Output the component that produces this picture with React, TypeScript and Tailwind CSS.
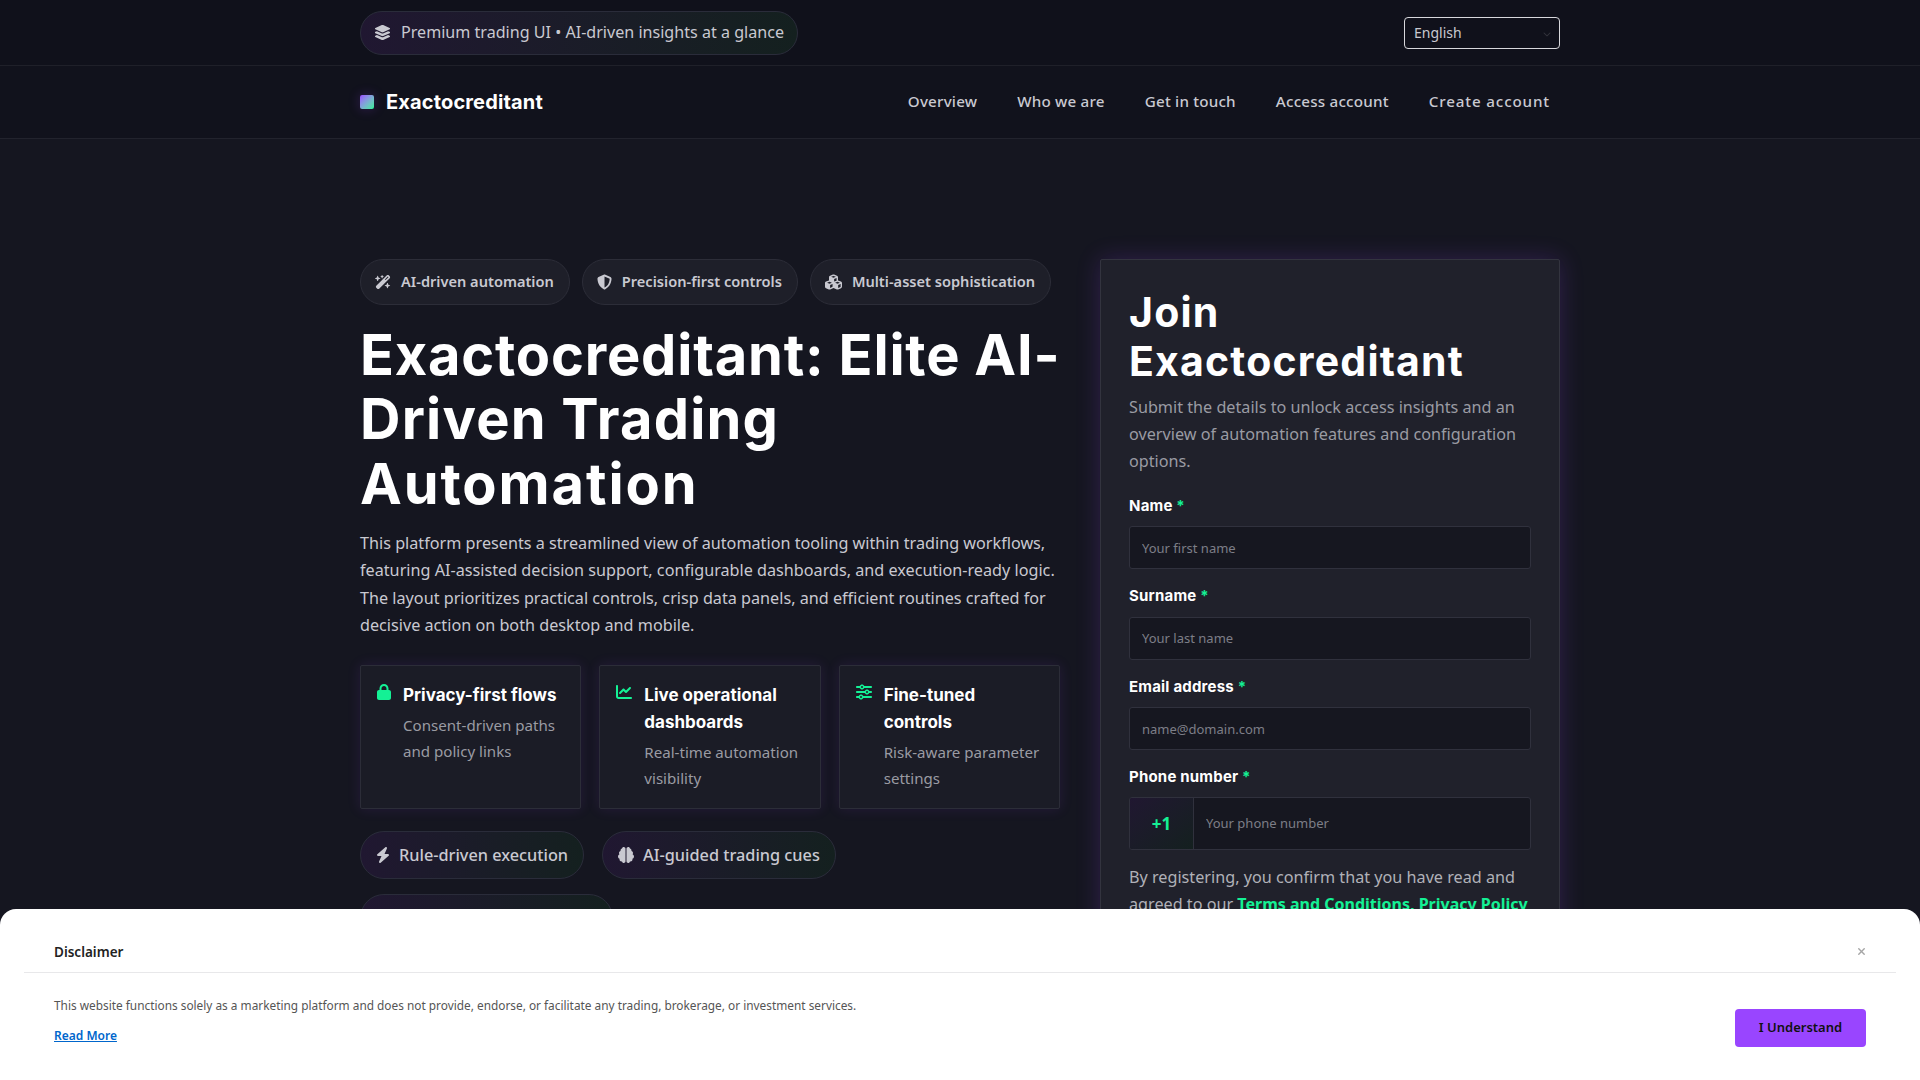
import React from "react";
import {
  FaLayerGroup,
  FaWandMagicSparkles,
  FaShieldHalved,
  FaCubes,
  FaLock,
  FaChartLine,
  FaSliders,
  FaBolt,
  FaBrain,
  FaChevronDown,
  FaXmark,
} from "react-icons/fa6";

const heroPills = [
  { icon: <FaWandMagicSparkles className="w-[16px] h-4" />, label: "AI-driven automation" },
  { icon: <FaShieldHalved className="w-[15px] h-4" />, label: "Precision-first controls" },
  { icon: <FaCubes className="w-[17px] h-[16px]" />, label: "Multi-asset sophistication" },
];

const features = [
  { icon: <FaLock className="w-[14px] h-4" />, title: "Privacy-first flows", desc: "Consent-driven paths and policy links" },
  { icon: <FaChartLine className="w-4 h-4" />, title: "Live operational dashboards", desc: "Real-time automation visibility" },
  { icon: <FaSliders className="w-4 h-4" />, title: "Fine-tuned controls", desc: "Risk-aware parameter settings" },
];

const tags = [
  { icon: <FaBolt className="w-[14px] h-4" />, label: "Rule-driven execution" },
  { icon: <FaBrain className="w-[16px] h-[16px]" />, label: "AI-guided trading cues" },
  { icon: <FaLayerGroup className="w-4 h-4" />, label: "Configurable dashboards" },
];

function Field({ label, placeholder }: { label: string; placeholder: string }) {
  return (
    <div className="mb-[17px]">
      <label className="block mb-[10.5px] font-['Inter'] font-bold text-[15px] leading-[20px] tracking-[0.2px] text-white">
        {label} <span className="text-[#14f195]">*</span>
      </label>
      <input
        placeholder={placeholder}
        className="block w-full h-[43px] px-[12px] rounded-[3px] border border-[#30313d] bg-[#161720] text-[13px] text-white outline-none placeholder:text-[#7d7e87]"
      />
    </div>
  );
}

export default function App() {
  return (
    <div className="relative h-screen overflow-hidden bg-[#151620] font-['Noto_Sans',sans-serif]">
      <div className="h-[66px] bg-[#10111b] border-b border-[#1f2029]">
        <div className="w-[1200px] mx-auto h-full flex items-center justify-between">
          <div className="flex items-center gap-[10px] h-[44px] pl-[13px] pr-[13px] rounded-full border border-[#2a2c3a] bg-linear-to-r from-[#201731] to-[#14201f] text-[#c9c9d1]">
            <FaLayerGroup className="w-[17px] h-[17px]" />
            <span className="pb-[1px] text-[16.1px] leading-none whitespace-nowrap">Premium trading UI • AI-driven insights at a glance</span>
          </div>
          <div className="relative w-[156px] h-[32px]">
            <select className="w-full h-full appearance-none rounded-[4px] border border-[#d8d8dc] bg-[#10111b] pl-[9px] text-[14px] text-[#c9c9d1] outline-none">
              <option>English</option>
            </select>
            <FaChevronDown className="absolute right-[9px] top-[13px] w-[8px] h-[8px] text-[#33343c]" />
          </div>
        </div>
      </div>

      <nav className="h-[73px] bg-[#11121c] border-b border-[#22232d]">
        <div className="w-[1200px] mx-auto h-full flex items-center justify-between">
          <div className="flex items-center gap-[12px]">
            <span className="w-[14px] h-[14px] rounded-[2px] bg-linear-to-br from-[#9945ff] to-[#14f195] shadow-[0_0_12px_rgba(153,69,255,0.25)]" />
            <span className="font-['Inter'] font-bold text-[20px] tracking-[0.15px] text-white">Exactocreditant</span>
          </div>
          <div className="flex items-center gap-[40px] pr-[10px] pb-[2px] text-[#c9c9d1] text-[15.2px] font-medium tracking-[0.2px]">
            <a>Overview</a>
            <a>Who we are</a>
            <a>Get in touch</a>
            <a>Access account</a>
            <a className="tracking-[0.85px]">Create account</a>
          </div>
        </div>
      </nav>

      <main className="w-[1200px] mx-auto pt-[120px] grid grid-cols-[700px_460px] gap-[40px]">
        <section>
          <div className="flex gap-[12px]">
            {heroPills.map((p) => (
              <div key={p.label} className="flex items-center gap-[10px] h-[46px] pl-[14px] pr-[15px] rounded-full border border-[#2c2d38] bg-[#1e1f29] text-[#c9c9d1]">
                {p.icon}
                <span className="pb-[1px] text-[14.6px] font-semibold whitespace-nowrap">{p.label}</span>
              </div>
            ))}
          </div>

          <h1 className="mt-[18px] font-['Inter'] font-bold text-[56px] leading-[64.4px] text-white whitespace-nowrap">
            <span className="tracking-[0.8px]">Exactocreditant: Elite AI-</span>
            <br />
            <span className="tracking-[1.2px]">Driven Trading</span>
            <br />
            <span className="tracking-[1.9px]">Automation</span>
          </h1>

          <p className="mt-[14px] text-[16.2px] leading-[27.2px] text-[#c9c9d1]">
            This platform presents a streamlined view of automation tooling within trading workflows, featuring AI-assisted decision support, configurable dashboards, and execution-ready logic. The layout prioritizes practical controls, crisp data panels, and efficient routines crafted for decisive action on both desktop and mobile.
          </p>

          <div className="mt-[26px] grid grid-cols-3 gap-[18px]">
            {features.map((f) => (
              <div key={f.title} className="flex gap-[12px] items-start p-[16px] rounded-[2px] border border-[#2c2d38] bg-[#1b1c26] shadow-[0_0_14px_rgba(153,69,255,0.12)]">
                <span className="mt-[2px] shrink-0 text-[#14f195]">{f.icon}</span>
                <div>
                  <div className="font-['Inter'] font-bold text-[17px] leading-[27.2px] text-white">{f.title}</div>
                  <div className="mt-[4px] text-[15.1px] leading-[25.84px] text-[#9a9ba3]">{f.desc}</div>
                </div>
              </div>
            ))}
          </div>

          <div className="mt-[22px] flex flex-wrap gap-x-[18px] gap-y-[15px] w-[560px]">
            {tags.map((t) => (
              <div key={t.label} className="flex items-center gap-[9px] h-[48px] pl-[15px] pr-[15px] rounded-full border border-[#2a2c3a] bg-linear-to-r from-[#201731] to-[#14201f] text-[#c9c9d1]">
                {t.icon}
                <span className="text-[16.3px] font-medium whitespace-nowrap">{t.label}</span>
              </div>
            ))}
          </div>
        </section>

        <aside className="self-start rounded-[2px] border border-[#33343f] bg-[#20212b] px-[28px] pt-[28px] pb-[28px] shadow-[0_0_24px_rgba(153,69,255,0.2)]">
          <h2 className="font-['Inter'] font-bold text-[41px] leading-[49px] tracking-[1.2px] text-white">
            Join<br />Exactocreditant
          </h2>
          <p className="mt-[8px] mb-[20px] text-[16.2px] leading-[27.2px] text-[#9a9ba3]">
            Submit the details to unlock access insights and an overview of automation features and configuration options.
          </p>
          <Field label="Name" placeholder="Your first name" />
          <Field label="Surname" placeholder="Your last name" />
          <Field label="Email address" placeholder="name@domain.com" />
          <div className="mb-[14px]">
            <label className="block mb-[10px] font-['Inter'] font-bold text-[15px] leading-[20px] tracking-[0.2px] text-white">
              Phone number <span className="text-[#14f195]">*</span>
            </label>
            <div className="flex h-[53px] rounded-[3px] border border-[#30313d] bg-[#161720] overflow-hidden">
              <span className="flex items-center justify-center w-[64px] shrink-0 border-r border-[#30313d] bg-linear-to-br from-[#201731] to-[#14201f] font-bold text-[17px] text-[#14f195]">+1</span>
              <input placeholder="Your phone number" className="flex-1 min-w-0 bg-transparent px-[12px] text-[13px] text-white outline-none placeholder:text-[#7d7e87]" />
            </div>
          </div>
          <p className="text-[16.2px] leading-[27.2px] text-[#b0b1b8]">
            By registering, you confirm that you have read and agreed to our <a className="text-[16px] font-bold text-[#14f195]">Terms and Conditions, Privacy Policy</a>
          </p>
        </aside>
      </main>

      <div className="absolute left-0 right-0 bottom-0 h-[171px] rounded-t-[16px] bg-white px-[24px]">
        <div className="relative h-[64px] pl-[30px] pt-[33px] border-b border-[#e8e8ea]">
          <span className="block text-[13.5px] leading-[20px] font-semibold text-[#222]">Disclaimer</span>
          <FaXmark className="absolute right-[29px] top-[37px] w-[11px] h-[11px] text-[#a5a5a5]" />
        </div>
        <div className="flex justify-between pl-[30px] pr-[30px]">
          <div>
            <p className="mt-[22px] text-[11.85px] leading-[20px] text-[#555]">
              This website functions solely as a marketing platform and does not provide, endorse, or facilitate any trading, brokerage, or investment services.
            </p>
            <a className="block mt-[11px] text-[12px] leading-[20px] font-semibold text-[#0066cc] underline">Read More</a>
          </div>
          <button className="mt-[36px] w-[131px] h-[38px] rounded-[4px] bg-[#9945ff] text-[13px] font-semibold text-[#111]">I Understand</button>
        </div>
      </div>
    </div>
  );
}
